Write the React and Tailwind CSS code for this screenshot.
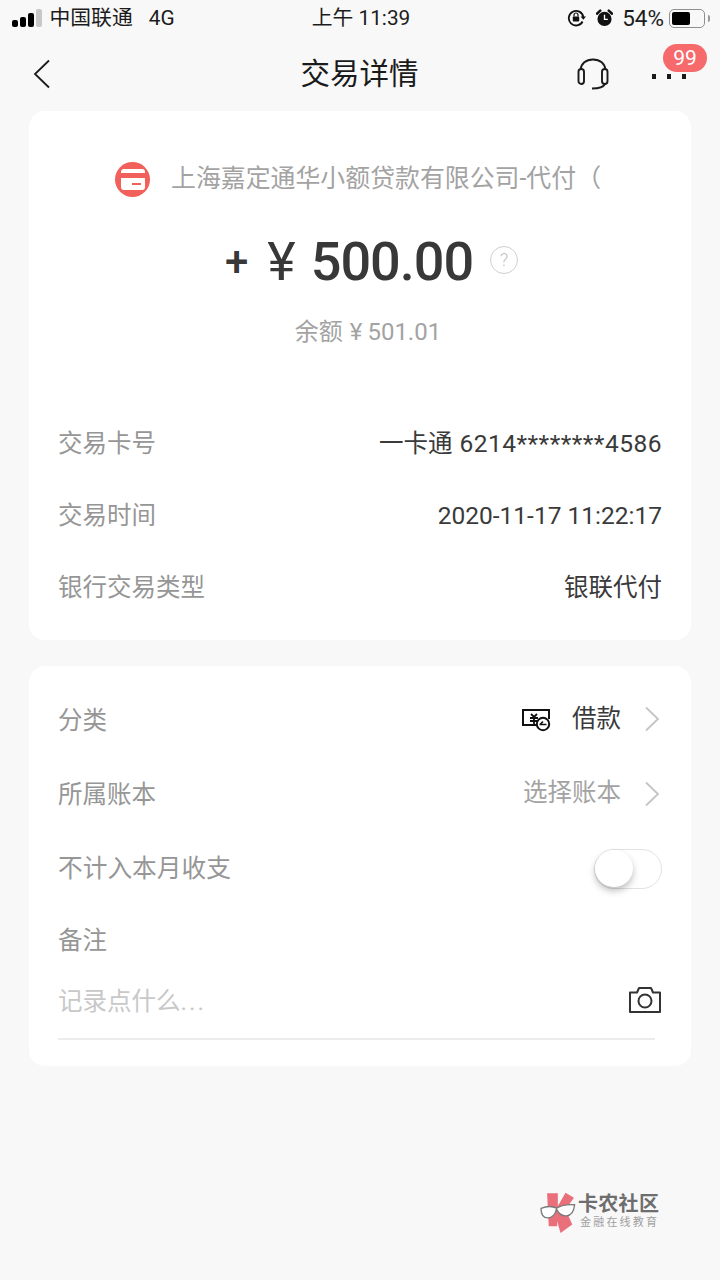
import React from "react";

const cjk = "font-['Roboto','Noto_Sans_CJK_SC',sans-serif]";

function StatusBar() {
  return (
    <div className="grid grid-cols-[1fr_auto_1fr] items-center h-9 pl-3 pr-[10px] text-[20.800px] leading-[36px] text-[#1c1c1c]">
      <div className="flex items-center">
        <div className="flex items-end gap-[2.500px] h-[18px]">
          <span className="w-[5.500px] h-[7px] rounded-[2px] bg-black" />
          <span className="w-[5.500px] h-[10px] rounded-[2px] bg-black" />
          <span className="w-[5.500px] h-[14px] rounded-[2px] bg-black" />
          <span className="w-[5.500px] h-[18px] rounded-[2px] bg-[#c8c8c8]" />
        </div>
        <span className="ml-2">中国联通</span>
        <span className="ml-4">4G</span>
      </div>
      <div className="text-center">上午 11:39</div>
      <div className="flex items-center justify-end">
        <svg width="20" height="18" viewBox="0 0 20 18" fill="none" className="mr-[9px]">
          <path d="M15.600 12.500A7.300 7.300 0 1 1 16.300 8" stroke="#111" strokeWidth="1.800" />
          <path d="M13.600 7.500h5.400l-2.700 3.200z" fill="#111" />
          <rect x="5.800" y="7.500" width="6.400" height="5" rx="0.800" fill="#111" />
          <path d="M7 7.500V6a2 2 0 0 1 4 0v1.500" stroke="#111" strokeWidth="1.200" />
        </svg>
        <svg width="17" height="18" viewBox="0 0 18 18" className="mr-[9px]">
          <circle cx="9" cy="10" r="7.500" fill="#111" />
          <path d="M1 4.500 4.500 1.200M17 4.500 13.500 1.200" stroke="#111" strokeWidth="2.600" strokeLinecap="round" />
          <path d="M9 5.500V10.500H12.500" stroke="#fff" strokeWidth="1.400" fill="none" />
        </svg>
        <span className="text-[22.500px]">54%</span>
        <div className="ml-[5px] w-[36px] h-[19px] rounded-[5px] border-[1.500px] border-[#8f8f8f] p-[2px]">
          <div className="w-[18px] h-full rounded-[2px] bg-black" />
        </div>
        <span className="ml-[3px] w-[2px] h-[7px] rounded-r-sm bg-[#9a9a9a]" />
      </div>
    </div>
  );
}

function NavBar() {
  return (
    <div className="relative grid grid-cols-[1fr_auto_1fr] items-center h-[75px] pl-[33px] pr-[34px]">
      <svg width="18" height="30" viewBox="0 0 18 30" fill="none">
        <path d="M16 1.500 2 15l14 13.500" stroke="#1a1a1a" strokeWidth="1.800" />
      </svg>
      <div className="text-center text-[29.500px] leading-[40px] text-[#1a1a1a]">交易详情</div>
      <div className="flex items-center justify-end">
        <svg width="32" height="32" viewBox="0 0 32 32" fill="none" className="mr-[43px]">
          <path d="M3.500 12C4 5.500 9 1.500 16 1.500S28 5.500 28.500 12" stroke="#1a1a1a" strokeWidth="1.900" />
          <rect x="1.500" y="11" width="5.500" height="15" rx="2.750" stroke="#1a1a1a" strokeWidth="1.900" />
          <rect x="25" y="11" width="5.500" height="15" rx="2.750" stroke="#1a1a1a" strokeWidth="1.900" />
          <path d="M28 26C26.500 29 22 30.500 15 30.500" stroke="#1a1a1a" strokeWidth="1.900" />
        </svg>
        <div className="flex gap-[11px] mt-[6px]">
          <span className="w-[4px] h-[5px] bg-[#1a1a1a]" />
          <span className="w-[4px] h-[5px] bg-[#1a1a1a]" />
          <span className="w-[4px] h-[5px] bg-[#1a1a1a]" />
        </div>
      </div>
      <div className="absolute top-[8px] left-[663px] w-[44px] h-[28px] rounded-full bg-[#f76a6c] text-white text-[21px] leading-[28px] text-center">99</div>
    </div>
  );
}

function Row({ label, children }) {
  return (
    <div className="flex items-center justify-between h-[72px]">
      <span className="text-[24.500px] text-[#969696]">{label}</span>
      <span className="text-[24.500px] text-[#3a3a3a]">{children}</span>
    </div>
  );
}

function Chevron() {
  return (
    <svg width="16" height="26" viewBox="0 0 16 26" fill="none" className="ml-[23px] mr-[2px]">
      <path d="M2 1.500 14 13 2 24.500" stroke="#c4c4c4" strokeWidth="1.800" />
    </svg>
  );
}

export default function App() {
  return (
    <div className={`relative w-[720px] h-[1280px] overflow-hidden bg-[#f8f8f8] ${cjk}`}>
      <StatusBar />
      <NavBar />

      <div className="mx-[29px] h-[529px] rounded-[16px] bg-white px-[29px] pt-[49px]">
        <div className="flex items-center pl-[57px] h-[38px]">
          <div className="flex items-center justify-center w-[35px] h-[35px] rounded-full bg-[#f2605c]">
            <div className="w-[24px] h-[21px] rounded-[3px] bg-white flex flex-col">
              <div className="h-[5px] mt-[4px] bg-[#f2605c]" />
              <div className="ml-auto mr-[4px] mt-[5px] w-[9px] h-[2px] bg-[#f2605c]" />
            </div>
          </div>
          <span className="ml-[21px] text-[24.900px] text-[#a3a3a3] whitespace-nowrap">上海嘉定通华小额贷款有限公司-代付（</span>
        </div>

        <div className="flex items-center mt-[31px] h-[66px] pl-[167px] text-[#383838] whitespace-nowrap leading-[66px]">
          <span className="text-[42px] font-medium">+</span>
          <span className="ml-[19px] text-[54px]">¥</span>
          <span className="ml-[15px] text-[54px] font-medium tracking-[-1px]">500.00</span>
          <span className="ml-[17px] mb-[4px] flex items-center justify-center w-[28px] h-[28px] rounded-full border-[1.500px] border-[#cfcfcf] text-[18px] font-light text-[#bdbdbd]">?</span>
        </div>

        <div className="flex justify-center mt-[19px] pl-[16px] text-[24px] leading-[36px] text-[#a3a3a3]">
          <span>余额</span>
          <span className="ml-[7px]">¥</span>
          <span className="ml-[5px]">501.01</span>
        </div>

        <div className="mt-[58px]">
          <Row label="交易卡号">
            <span className="mr-[7px]">一卡通</span>
            <span className="tracking-[0.500px]">6214********4586</span>
          </Row>
          <Row label="交易时间">2020-11-17 11:22:17</Row>
          <Row label="银行交易类型">银联代付</Row>
        </div>
      </div>

      <div className="mx-[29px] mt-[26px] h-[400px] rounded-[16px] bg-white px-[29px] pt-[18px]">
        <div className="flex items-center justify-between h-[74px]">
          <span className="text-[24.500px] text-[#969696]">分类</span>
          <div className="flex items-center mb-[4px]">
            <svg width="30" height="26" viewBox="0 0 30 26" fill="none" className="mr-[21px]">
              <path d="M17 19H2V4h26v9" stroke="#111" strokeWidth="2" />
              <path d="M10 8l3 3 3-3M9 12h8M9 15h8M13 11v7" stroke="#111" strokeWidth="1.800" />
              <circle cx="22" cy="18" r="6.200" stroke="#111" strokeWidth="2" fill="#fff" />
              <path d="M18.500 18.500h7M22 15.500l-3 3" stroke="#111" strokeWidth="1.600" />
            </svg>
            <span className="text-[24.500px] text-[#3a3a3a]">借款</span>
            <Chevron />
          </div>
        </div>
        <div className="flex items-center justify-between h-[74px]">
          <span className="text-[24.500px] text-[#969696]">所属账本</span>
          <div className="flex items-center mb-[3px]">
            <span className="text-[24.500px] text-[#a3a3a3]">选择账本</span>
            <Chevron />
          </div>
        </div>
        <div className="flex items-center justify-between h-[74px]">
          <span className="text-[24.700px] text-[#969696]">不计入本月收支</span>
          <div className="w-[68px] h-[40px] rounded-full border-[1.500px] border-[#e2e2e2] bg-white">
            <div className="w-[38px] h-[37px] rounded-full bg-white shadow-[0_4px_7px_rgba(0,0,0,0.25)]" />
          </div>
        </div>
        <div className="flex items-center h-[70px] text-[24.500px] text-[#969696]">备注</div>
        <div className="flex items-center justify-between h-[52px]">
          <span className="pt-[1px] text-[24.500px] text-[#c8c8c8]">记录点什么<span className="tracking-[2px]">...</span></span>
          <svg width="34" height="28" viewBox="0 0 34 28" fill="none" className="mb-[4px]">
            <path d="M2 6.500h7l2-4.500h12l2 4.500h7v19.500H2z" stroke="#333" strokeWidth="2" strokeLinejoin="round" />
            <circle cx="17" cy="15" r="6.500" stroke="#333" strokeWidth="2" />
          </svg>
        </div>
        <div className="mt-[10px] mr-[7px] h-[2px] bg-[#ececec]" />
      </div>

      <div className="absolute left-[540px] top-[1191px] flex items-center">
        <svg width="36" height="42" viewBox="0 0 105 125">
          <path d="M20 7h32v38L75 5l25 15-25 35 20 45-35 25-10-35v15H25z" fill="#e96f7b" />
          <path d="M2 52c14-6 32-8 46-1 14-8 34-12 54-10-2 18-8 32-24 33-14 1-24-8-30-20-4 16-12 26-26 26-14 0-20-12-20-28z" fill="#fff" stroke="#7a7a7a" strokeWidth="4" />
        </svg>
        <div className="ml-[2px] flex flex-col">
          <span className="text-[20px] leading-[22px] font-bold text-[#6e6e6e] tracking-[0.300px]">卡农社区</span>
          <span className="ml-[2px] text-[11px] leading-[16px] text-[#a0a0a0] tracking-[2.200px]">金融在线教育</span>
        </div>
      </div>
    </div>
  );
}
